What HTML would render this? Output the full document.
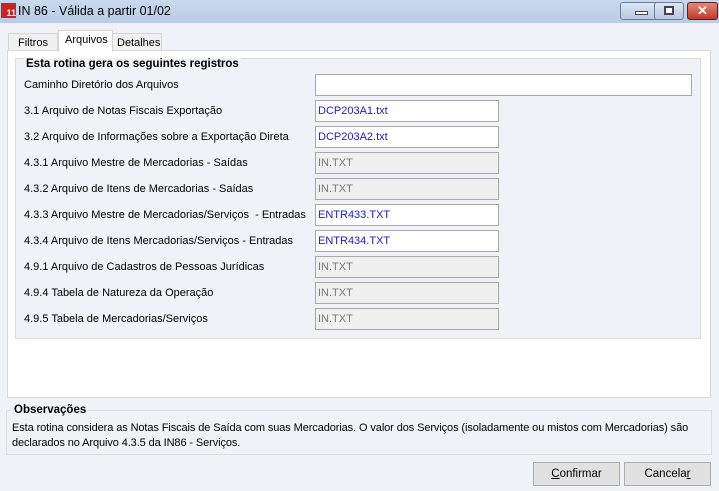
<!DOCTYPE html>
<html><head><meta charset="utf-8"><style>
*{margin:0;padding:0;box-sizing:border-box}
body{width:719px;height:491px;overflow:hidden;background:#f1f2f7;font-family:"Liberation Sans",sans-serif;font-size:11px;color:#000;position:relative}
.abs{position:absolute}
.title{left:0;top:0;width:719px;height:23px;background:linear-gradient(#c9d9ee,#b9cde6);}
.tb{top:2px;height:18px;border:1px solid #6d7f99;border-radius:3px;background:linear-gradient(#dde7f3,#b6c8e0)}
.lbl{left:24px;white-space:nowrap}
.inp{left:315px;width:184px;height:22px;border:1px solid #a9a9a9;background:#fff;padding:4px 2px;color:#1a1ad0;white-space:nowrap}
.dis{background:#f0f0f0;color:#7a7a7a}
.btn{top:462px;height:24px;width:87px;border:1px solid #acacac;background:#e1e1e1;text-align:center;line-height:22px;font-size:11.5px}
</style></head><body>
<div class="abs title"></div>
<div class="abs" style="left:1px;top:3px;width:15px;height:15px;background:#c22;color:#fff;font-size:9px;font-weight:bold;line-height:20px;text-align:right">11</div>
<div class="abs" style="left:18px;top:4px;font-size:12.5px">IN 86 - Válida a partir 01/02</div>
<div class="abs tb" style="left:620px;width:42px"><div class="abs" style="left:14px;top:8px;width:13px;height:4px;background:#fff;border:1px solid #445"></div></div>
<div class="abs tb" style="left:654px;width:30px"><div class="abs" style="left:9px;top:3px;width:10px;height:9px;border:2px solid #445;background:#fff"></div></div>
<div class="abs" style="left:687px;top:2px;width:31px;height:18px;border:1px solid #5a2020;border-radius:3px;background:linear-gradient(#e08a7a,#c0392b);color:#fff;font-weight:bold;text-align:center;line-height:16px;font-size:13px">✕</div>
<div class="abs" style="left:8px;top:33px;width:50px;height:18px;border:1px solid #d5d5d5;border-bottom:none;background:#f0f0f0;padding:3px 0 0 9px">Filtros</div>
<div class="abs" style="left:112px;top:33px;width:50px;height:18px;border:1px solid #d5d5d5;border-bottom:none;background:#f0f0f0;padding:3px 0 0 4px">Detalhes</div>
<div class="abs" style="left:7px;top:50px;width:704px;height:348px;border:1px solid #d9d9d9;background:#fff"></div>
<div class="abs" style="left:58px;top:30px;width:55px;height:22px;border:1px solid #d5d5d5;border-bottom:none;background:#fff;padding:3px 0 0 6px">Arquivos</div>
<div class="abs" style="left:15px;top:58px;width:686px;height:281px;background:#f1f2f7;border:1px solid #dcdcdc"></div>
<div class="abs" style="left:24px;top:58px;font-weight:bold;font-size:11.5px;background:#f1f2f7;padding:0 2px">Esta rotina gera os seguintes registros</div>
<div class="abs lbl" style="top:79px">Caminho Diretório dos Arquivos</div>
<div class="abs inp" style="top:74px;width:377px"></div>
<div class="abs lbl" style="top:105px">3.1 Arquivo de Notas Fiscais Exportação</div>
<div class="abs inp" style="top:100px">DCP203A1.txt</div>
<div class="abs lbl" style="top:131px">3.2 Arquivo de Informações sobre a Exportação Direta</div>
<div class="abs inp" style="top:126px">DCP203A2.txt</div>
<div class="abs lbl" style="top:157px">4.3.1 Arquivo Mestre de Mercadorias - Saídas</div>
<div class="abs inp dis" style="top:152px">IN.TXT</div>
<div class="abs lbl" style="top:183px">4.3.2 Arquivo de Itens de Mercadorias - Saídas</div>
<div class="abs inp dis" style="top:178px">IN.TXT</div>
<div class="abs lbl" style="top:209px">4.3.3 Arquivo Mestre de Mercadorias/Serviços &nbsp;- Entradas</div>
<div class="abs inp" style="top:204px">ENTR433.TXT</div>
<div class="abs lbl" style="top:235px">4.3.4 Arquivo de Itens Mercadorias/Serviços - Entradas</div>
<div class="abs inp" style="top:230px">ENTR434.TXT</div>
<div class="abs lbl" style="top:261px">4.9.1 Arquivo de Cadastros de Pessoas Jurídicas</div>
<div class="abs inp dis" style="top:256px">IN.TXT</div>
<div class="abs lbl" style="top:287px">4.9.4 Tabela de Natureza da Operação</div>
<div class="abs inp dis" style="top:282px">IN.TXT</div>
<div class="abs lbl" style="top:313px">4.9.5 Tabela de Mercadorias/Serviços</div>
<div class="abs inp dis" style="top:308px">IN.TXT</div>
<div class="abs" style="left:6px;top:410px;width:706px;height:45px;border:1px solid #dcdcdc"></div>
<div class="abs" style="left:12px;top:404px;font-weight:bold;font-size:11.5px;background:#f1f2f7;padding:0 2px">Observações</div>
<div class="abs" style="left:12px;top:421px;line-height:15px;width:700px;letter-spacing:-0.1px">Esta rotina considera as Notas Fiscais de Saída com suas Mercadorias. O valor dos Serviços (isoladamente ou mistos com Mercadorias) são<br>declarados no Arquivo 4.3.5 da IN86 - Serviços.</div>
<div class="abs btn" style="left:533px"><u>C</u>onfirmar</div>
<div class="abs btn" style="left:624px">Cancela<u>r</u></div>
</body></html>
